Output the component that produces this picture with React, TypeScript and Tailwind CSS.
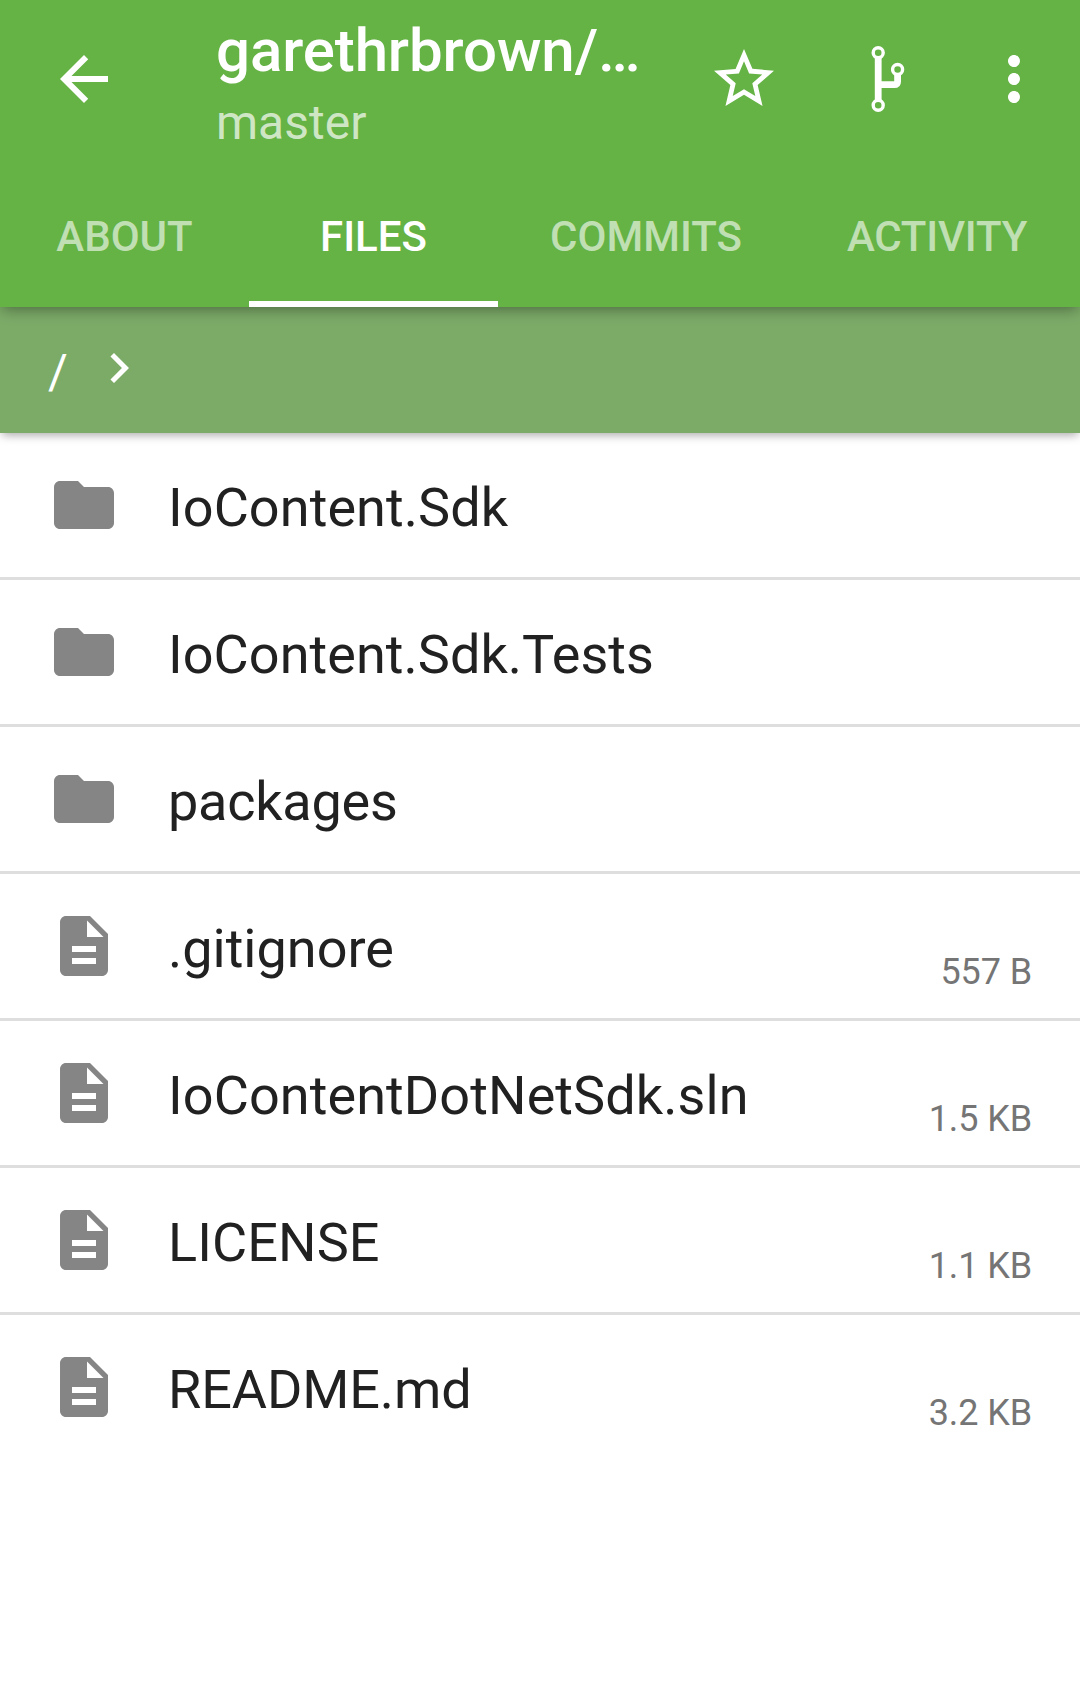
import React from "react";

type Entry = { name: string; size?: string; tracking: string };

const entries: Entry[] = [
  { name: "IoContent.Sdk", tracking: "tracking-[0.08px]" },
  { name: "IoContent.Sdk.Tests", tracking: "tracking-[0.05px]" },
  { name: "packages", tracking: "tracking-[-0.25px]" },
  { name: ".gitignore", size: "557 B", tracking: "tracking-normal" },
  { name: "IoContentDotNetSdk.sln", size: "1.5 KB", tracking: "tracking-[0.09px]" },
  { name: "LICENSE", size: "1.1 KB", tracking: "tracking-[0.1px]" },
  { name: "README.md", size: "3.2 KB", tracking: "tracking-[-0.1px]" },
];

function Icon({ d, className }: { d: string; className: string }) {
  return (
    <svg viewBox="0 0 24 24" className={className} fill="currentColor" aria-hidden="true">
      <path d={d} />
    </svg>
  );
}

const BACK = "M20 11H7.83l5.59-5.59L12 4l-8 8 8 8 1.41-1.41L7.83 13H20v-2z";
const STAR =
  "M22 9.24l-7.19-.62L12 2 9.19 8.63 2 9.24l5.46 4.73L5.82 21 12 17.27 18.18 21l-1.63-7.03L22 9.24zM12 15.4l-3.76 2.27 1-4.28-3.32-2.88 4.38-.38L12 6.1l1.71 4.04 4.38.38-3.32 2.88 1 4.28L12 15.4z";
const MORE =
  "M12 8c1.1 0 2-.9 2-2s-.9-2-2-2-2 .9-2 2 .9 2 2 2zm0 2c-1.1 0-2 .9-2 2s.9 2 2 2 2-.9 2-2-.9-2-2-2zm0 6c-1.1 0-2 .9-2 2s.9 2 2 2 2-.9 2-2-.9-2-2-2z";
const CHEVRON = "M10 6L8.59 7.41 13.17 12l-4.58 4.59L10 18l6-6z";
const FOLDER = "M10 4H4c-1.1 0-1.99.9-1.99 2L2 18c0 1.1.9 2 2 2h16c1.1 0 2-.9 2-2V8c0-1.1-.9-2-2-2h-8l-2-2z";
const FILE =
  "M14 2H6c-1.1 0-1.99.9-1.99 2L4 20c0 1.1.89 2 1.99 2H18c1.1 0 2-.9 2-2V8l-6-6zm2 16H8v-2h8v2zm0-4H8v-2h8v2zm-3-5V3.500L18.500 9H13z";

function Branch() {
  return (
    <svg viewBox="0 0 72 72" className="size-[72px]" fill="none" stroke="white" aria-hidden="true">
      <circle cx="26.200" cy="9.700" r="5" strokeWidth="3.400" />
      <circle cx="26.200" cy="62.300" r="5" strokeWidth="3.400" />
      <circle cx="45.600" cy="26.500" r="5" strokeWidth="3.400" />
      <path d="M26.200 14.500v43M26.200 41.700h16.200q3.200 0 3.200-3.200v-7.200" strokeWidth="6.800" />
    </svg>
  );
}

export default function App() {
  return (
    <div className="h-[1699px] w-[1080px] overflow-hidden bg-white font-[Roboto,sans-serif]">
      <header className="relative z-20 h-[307px] bg-[#65b245] text-white shadow-[0_4px_14px_-2px_rgba(0,0,0,0.4)]">
        <div className="flex h-[168px]">
          <Icon d={BACK} className="mt-[43px] ml-[48px] size-[72px]" />
          <div className="ml-[96px] w-[441px] pt-[18px]">
            <h1 className="text-[60px] leading-[66px] font-medium tracking-[-0.1px]">garethrbrown/…</h1>
            <p className="mt-[11px] text-[48px] leading-[56px] text-white/70">master</p>
          </div>
          <Icon d={STAR} className="mt-[43px] ml-[51px] size-[72px]" />
          <div className="mt-[43px] ml-[72px]"><Branch /></div>
          <Icon d={MORE} className="mt-[43px] ml-[54px] size-[72px]" />
        </div>
        <nav className="flex h-[139px] text-[42px] leading-[50px] font-medium text-white/60">
          <span className="w-[249px] pt-[44px] text-center">ABOUT</span>
          <span className="w-[249px] border-b-[6px] border-white pt-[44px] text-center text-white">FILES</span>
          <span className="w-[296px] pt-[44px] text-center">COMMITS</span>
          <span className="w-[286px] pt-[44px] text-center tracking-[-0.2px]">ACTIVITY</span>
        </nav>
      </header>
      <div className="relative z-10 flex h-[126px] items-center bg-[#7cab68] text-white shadow-[0_4px_9px_-2px_rgba(0,0,0,0.35)]">
        <span className="mt-[4px] ml-[48px] text-[48px]">/</span>
        <Icon d={CHEVRON} className="-mt-[4px] ml-[21px] size-[60px]" />
      </div>
      <main className="divide-y-[3px] divide-[#dedede]">
        {entries.map((e) => (
          <div key={e.name} className="flex h-[147px]">
            <Icon d={e.size ? FILE : FOLDER} className="mt-[36px] ml-[48px] size-[72px] text-[#858585]" />
            <span className={`mt-[43px] ml-[48px] grow text-[54px] leading-[64px] text-[#212121] ${e.tracking}`}>
              {e.name}
            </span>
            {e.size && (
              <span className="mt-[77px] mr-[48px] text-[36px] leading-[42px] tracking-[-0.1px] text-[#757575]">{e.size}</span>
            )}
          </div>
        ))}
      </main>
    </div>
  );
}
